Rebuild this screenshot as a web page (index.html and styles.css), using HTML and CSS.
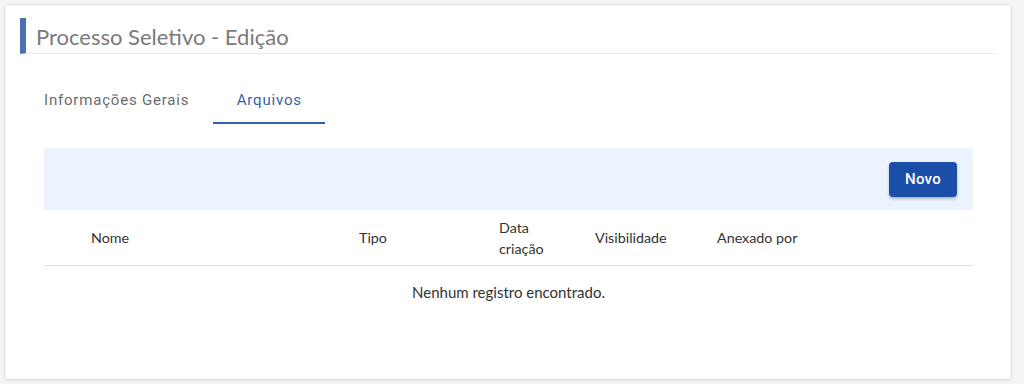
FILE: index.html
```html
<!DOCTYPE html>
<html lang="pt-BR">
<head>
<meta charset="utf-8">
<title>Processo Seletivo - Edição</title>
<link rel="stylesheet" href="styles.css">
</head>
<body>
<div class="card">
  <div class="title-bar">
    <h1 class="title">Processo Seletivo - Edição</h1>
  </div>
  <div class="tabs">
    <div class="tab">Informações Gerais</div>
    <div class="tab active">Arquivos</div>
  </div>
  <div class="section">
    <div class="toolbar">
      <button class="btn">Novo</button>
    </div>
    <div class="table">
      <div class="thead">
        <div class="th"></div>
        <div class="th">Nome</div>
        <div class="th">Tipo</div>
        <div class="th">Data criação</div>
        <div class="th">Visibilidade</div>
        <div class="th">Anexado por</div>
      </div>
      <div class="empty">Nenhum registro encontrado.</div>
    </div>
  </div>
</div>
</body>
</html>
```
FILE: styles.css
```css
html, body {
  margin: 0;
  padding: 0;
  background: #f4f4f4;
}
body {
  padding: 4px 12px 4px 4px;
  font-family: Lato, "Open Sans", sans-serif;
}
.card {
  background: #fff;
  border: 1px solid #e1e1e1;
  border-radius: 4px;
  box-shadow: 0 1px 2px rgba(0,0,0,0.05);
  height: 376px;
  box-sizing: border-box;
  padding: 13px 15px 0 15px;
}
.title-bar {
  border-left: 6px solid #4a72b0;
  height: 36px;
  box-sizing: border-box;
  border-bottom: 1px solid #e4ebf3;
  display: flex;
  align-items: center;
  padding-left: 10px;
}
.title {
  margin: 0;
  font-size: 22px;
  font-weight: 400;
  color: #7a7a7a;
  padding-top: 1px;
}
.tabs {
  display: flex;
  margin-top: 22px;
  height: 48px;
}
.tab {
  font-family: Roboto, sans-serif;
  font-size: 15px;
  letter-spacing: 0.8px;
  color: #6b6b6b;
  padding: 0 24px;
  display: flex;
  align-items: center;
  box-sizing: border-box;
  border-bottom: 2px solid transparent;
  padding-top: 2px;
}
.tab.active {
  color: #3862ad;
  border-bottom-color: #3060b5;
  width: 112px;
  justify-content: center;
}
.section {
  margin: 24px 23px 0 24px;
}
.toolbar {
  background: #ebf3fe;
  height: 62px;
  display: flex;
  align-items: center;
  justify-content: flex-end;
  padding-right: 16px;
}
.btn {
  font-family: Roboto, sans-serif;
  font-size: 15px;
  font-weight: 500;
  color: #fff;
  background: #1a4ea8;
  border: none;
  border-radius: 4px;
  width: 68px;
  height: 35px;
  box-shadow: 0 2px 3px rgba(0,0,0,0.25);
  letter-spacing: 0.3px;
}
.thead {
  display: grid;
  grid-template-columns: 31px 268px 140px 96px 122px 1fr;
  height: 55px;
  border-bottom: 1px solid #e0e0e0;
  align-items: center;
}
.th {
  padding: 0 16px;
  font-size: 14.3px;
  line-height: 21px;
  color: #333;
}
.empty {
  text-align: center;
  font-size: 15px;
  color: #333;
  padding-top: 17px;
}
```
